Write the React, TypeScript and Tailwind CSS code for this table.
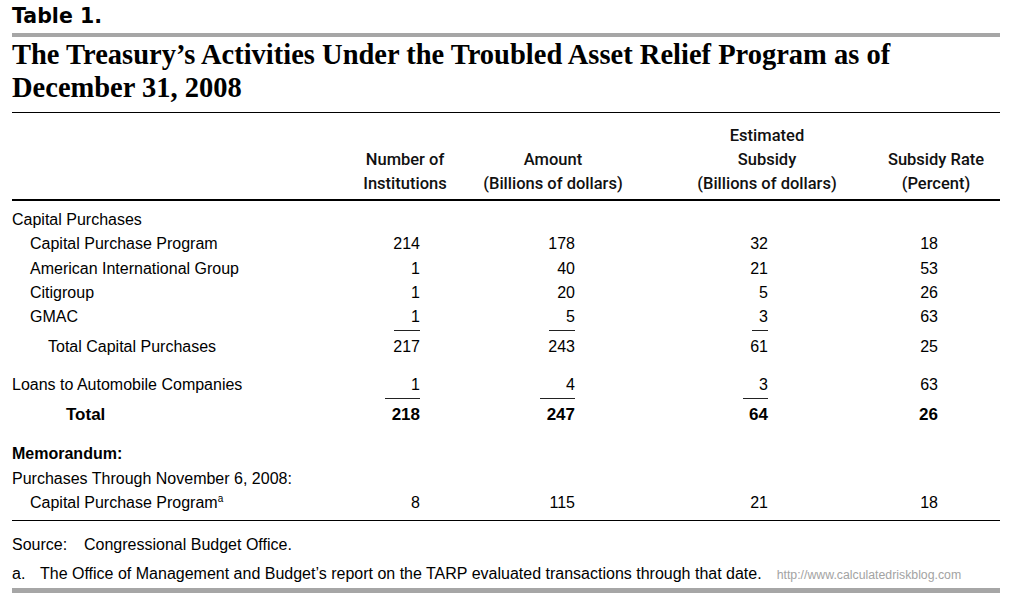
import React from 'react';

const cols = 'grid grid-cols-[328px_130px_166px_262px_76px]';
const pads = ['pr-[50px]', 'pr-[61px]', 'pr-[130px]', 'pr-[36px]'];

type RowProps = {
  label: React.ReactNode;
  indent?: string;
  vals?: string[];
  lines?: (string | null)[];
  bold?: boolean;
  className?: string;
};

function Row({ label, indent = '', vals = [], lines = [], bold, className = '' }: RowProps) {
  return (
    <div className={`${cols} leading-[24px] ${bold ? 'font-bold' : ''} ${className}`}>
      <div className={`whitespace-nowrap ${indent}`}>{label}</div>
      {[0, 1, 2, 3].map((i) => (
        <div key={i} className={`flex justify-end items-start ${pads[i]}`}>
          {vals[i] !== undefined && (
            <span
              className={`inline-block text-right ${lines[i] ? 'border-b border-[#222] pb-[1px]' : ''}`}
              style={lines[i] ? { width: lines[i] as string } : undefined}
            >
              {vals[i]}
            </span>
          )}
        </div>
      ))}
    </div>
  );
}

function Head({ lines }: { lines: string[] }) {
  return (
    <div className="flex flex-col items-center whitespace-nowrap">
      {lines.map((l) => (
        <div key={l}>{l}</div>
      ))}
    </div>
  );
}

export default function App() {
  return (
    <div className="w-[1034px] h-[606px] bg-white text-black font-['Liberation_Sans',Arial,sans-serif] text-[16px] overflow-hidden">
      <div className="w-[988px] ml-[12px]">
        {/* Table label */}
        <div className="pt-[4px] leading-[24px] text-[20.5px] font-bold font-['DejaVu_Sans',sans-serif]">Table 1.</div>
        <div className="mt-[5px] h-[4px] bg-[#a6a6a6]"></div>

        {/* Title */}
        <h1 className="mt-[1px] text-[28.5px] leading-[33px] font-bold font-['Liberation_Serif','Times_New_Roman',serif]">
          The Treasury’s Activities Under the Troubled Asset Relief Program as of
          <br />
          December 31, 2008
        </h1>
        <div className="mt-[8px] h-px bg-black"></div>

        {/* Column headers */}
        <div className={`${cols} items-end mt-[11px] leading-[24px] text-[16.5px] font-medium font-['Roboto',sans-serif] text-[#111]`}>
          <div></div>
          <Head lines={['Number of', 'Institutions']} />
          <Head lines={['Amount', '(Billions of dollars)']} />
          <Head lines={['Estimated', 'Subsidy', '(Billions of dollars)']} />
          <Head lines={['Subsidy Rate', '(Percent)']} />
        </div>
        <div className="mt-[3px] h-[2px] bg-black"></div>

        {/* Body */}
        <Row label="Capital Purchases" className="mt-[7px]" />
        <Row label="Capital Purchase Program" indent="pl-[18px]" vals={['214', '178', '32', '18']} />
        <Row label="American International Group" indent="pl-[18px]" vals={['1', '40', '21', '53']} className="mt-[1px]" />
        <Row label="Citigroup" indent="pl-[18px]" vals={['1', '20', '5', '26']} />
        <Row
          label="GMAC"
          indent="pl-[18px]"
          vals={['1', '5', '3', '63']}
          lines={['26px', '26px', '16px', null]}
        />
        <Row label="Total Capital Purchases" indent="pl-[36px]" vals={['217', '243', '61', '25']} className="mt-[4px]" />
        <Row
          label="Loans to Automobile Companies"
          vals={['1', '4', '3', '63']}
          lines={['35px', '35px', '25px', null]}
          className="mt-[14px]"
        />
        <Row label="Total" indent="pl-[54px]" vals={['218', '247', '64', '26']} bold className="mt-[4px] text-[17px]" />

        {/* Memorandum */}
        <div className="mt-[15px] leading-[24px] font-bold">Memorandum:</div>
        <div className="mt-[1px] leading-[24px]">Purchases Through November 6, 2008:</div>
        <Row
          label={
            <span>
              Capital Purchase Program<sup className="text-[10px] -top-[6px]">a</sup>
            </span>
          }
          indent="pl-[18px]"
          vals={['8', '115', '21', '18']}
        />
        <div className="mt-[5px] h-px bg-black"></div>

        {/* Notes */}
        <div className="mt-[12px] leading-[24px] flex">
          <span className="w-[72px]">Source:</span>
          <span>Congressional Budget Office.</span>
        </div>
        <div className="mt-[5px] leading-[24px] flex items-baseline whitespace-nowrap">
          <span className="w-[28px]">a.</span>
          <span>The Office of Management and Budget’s report on the TARP evaluated transactions through that date.</span>
          <span className="ml-[15px] text-[12.3px] text-[#a3a3a3]">http://www.calculatedriskblog.com</span>
        </div>
        <div className="mt-[1px] h-[5px] bg-[#a6a6a6]"></div>
      </div>
    </div>
  );
}
